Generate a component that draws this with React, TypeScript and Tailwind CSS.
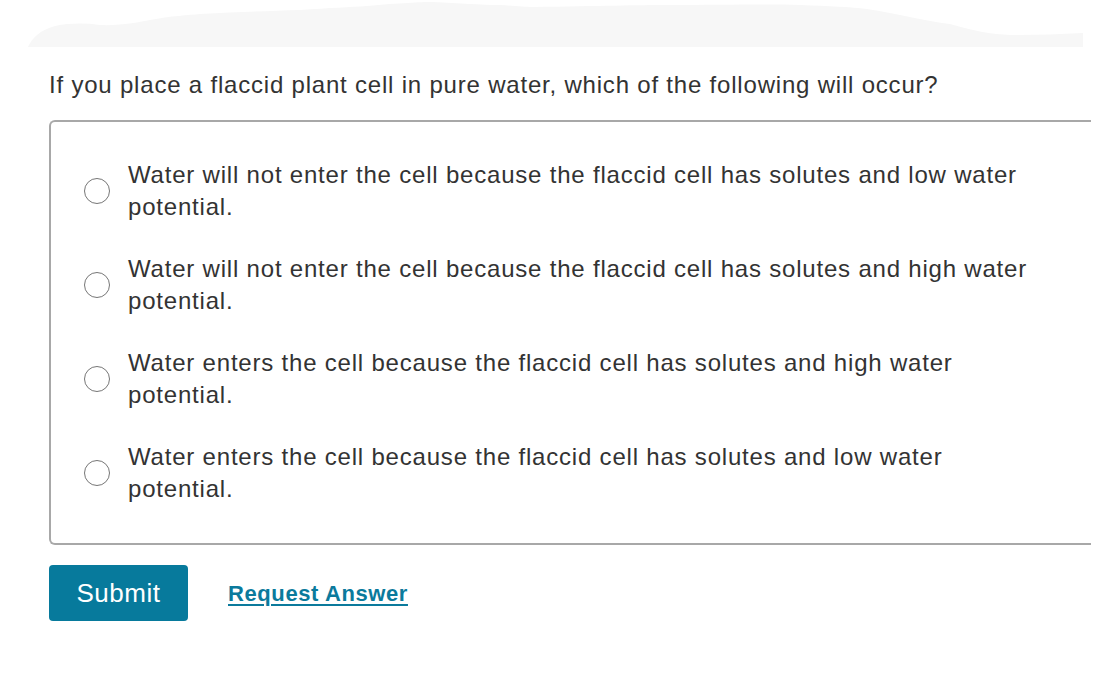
import React, { useState } from 'react';

const options = [
  'Water will not enter the cell because the flaccid cell has solutes and low water potential.',
  'Water will not enter the cell because the flaccid cell has solutes and high water potential.',
  'Water enters the cell because the flaccid cell has solutes and high water potential.',
  'Water enters the cell because the flaccid cell has solutes and low water potential.',
];

const App: React.FC = () => {
  const [selected, setSelected] = useState<number | null>(null);

  return (
    <div className="w-[1099px] h-[674px] overflow-hidden bg-white text-[#333] font-['Liberation_Sans',Arial,sans-serif]">
      {/* 上部の波形 */}
      <svg width="1099" height="48" viewBox="0 0 1099 48" className="block">
        <path
          d="M28 47 C32 38 40 30 55 26 C70 23 85 23 100 25 C120 26 140 22 150 20 C170 16 190 15 200 14 C240 12 270 11 300 10 C330 8 350 7 367 6 C400 3 420 2 433 2 C460 3 480 5 500 5 C515 6 525 7 533 7 C600 6 640 5 667 5 C720 5 770 4 800 5 C830 6 850 7 867 9 C900 14 930 22 950 24 C980 33 1000 35 1017 35 C1040 35 1060 34 1083 33 L1083 47 Z"
          fill="#f7f7f7"
        />
      </svg>

      <div className="pl-[49px] pt-[24px]">
        <p className="text-[24px] leading-[26px] tracking-[0.8px]">
          If you place a flaccid plant cell in pure water, which of the following will occur?
        </p>

        <div className="mt-[22px] w-[1042px] border-2 border-r-0 border-[#a8a8a8] rounded-l-[6px] pt-[37px] pb-[38px] flex flex-col gap-[30px]">
          {options.map((text, i) => (
            <label key={i} className="flex items-center cursor-pointer">
              <span className="w-[80px] flex justify-center shrink-0 pl-[12px]">
                <input
                  type="radio"
                  name="answer"
                  checked={selected === i}
                  onChange={() => setSelected(i)}
                  className="sr-only"
                />
                <span className="w-[26px] h-[26px] rounded-full border border-[#767676] bg-white" />
              </span>
              <span className="text-[24px] leading-[32px] tracking-[0.8px] w-[915px] -ml-[3px]">{text}</span>
            </label>
          ))}
        </div>

        <div className="mt-[20px] flex items-center gap-[40px]">
          <button className="w-[139px] h-[56px] rounded-[4px] bg-[#077a9c] text-white text-[26px] tracking-[0.5px]">
            Submit
          </button>
          <a href="#" className="text-[#0b7a9c] font-bold text-[22px] tracking-[0.6px] underline underline-offset-[3px]">
            Request Answer
          </a>
        </div>
      </div>
    </div>
  );
};

export default App;
